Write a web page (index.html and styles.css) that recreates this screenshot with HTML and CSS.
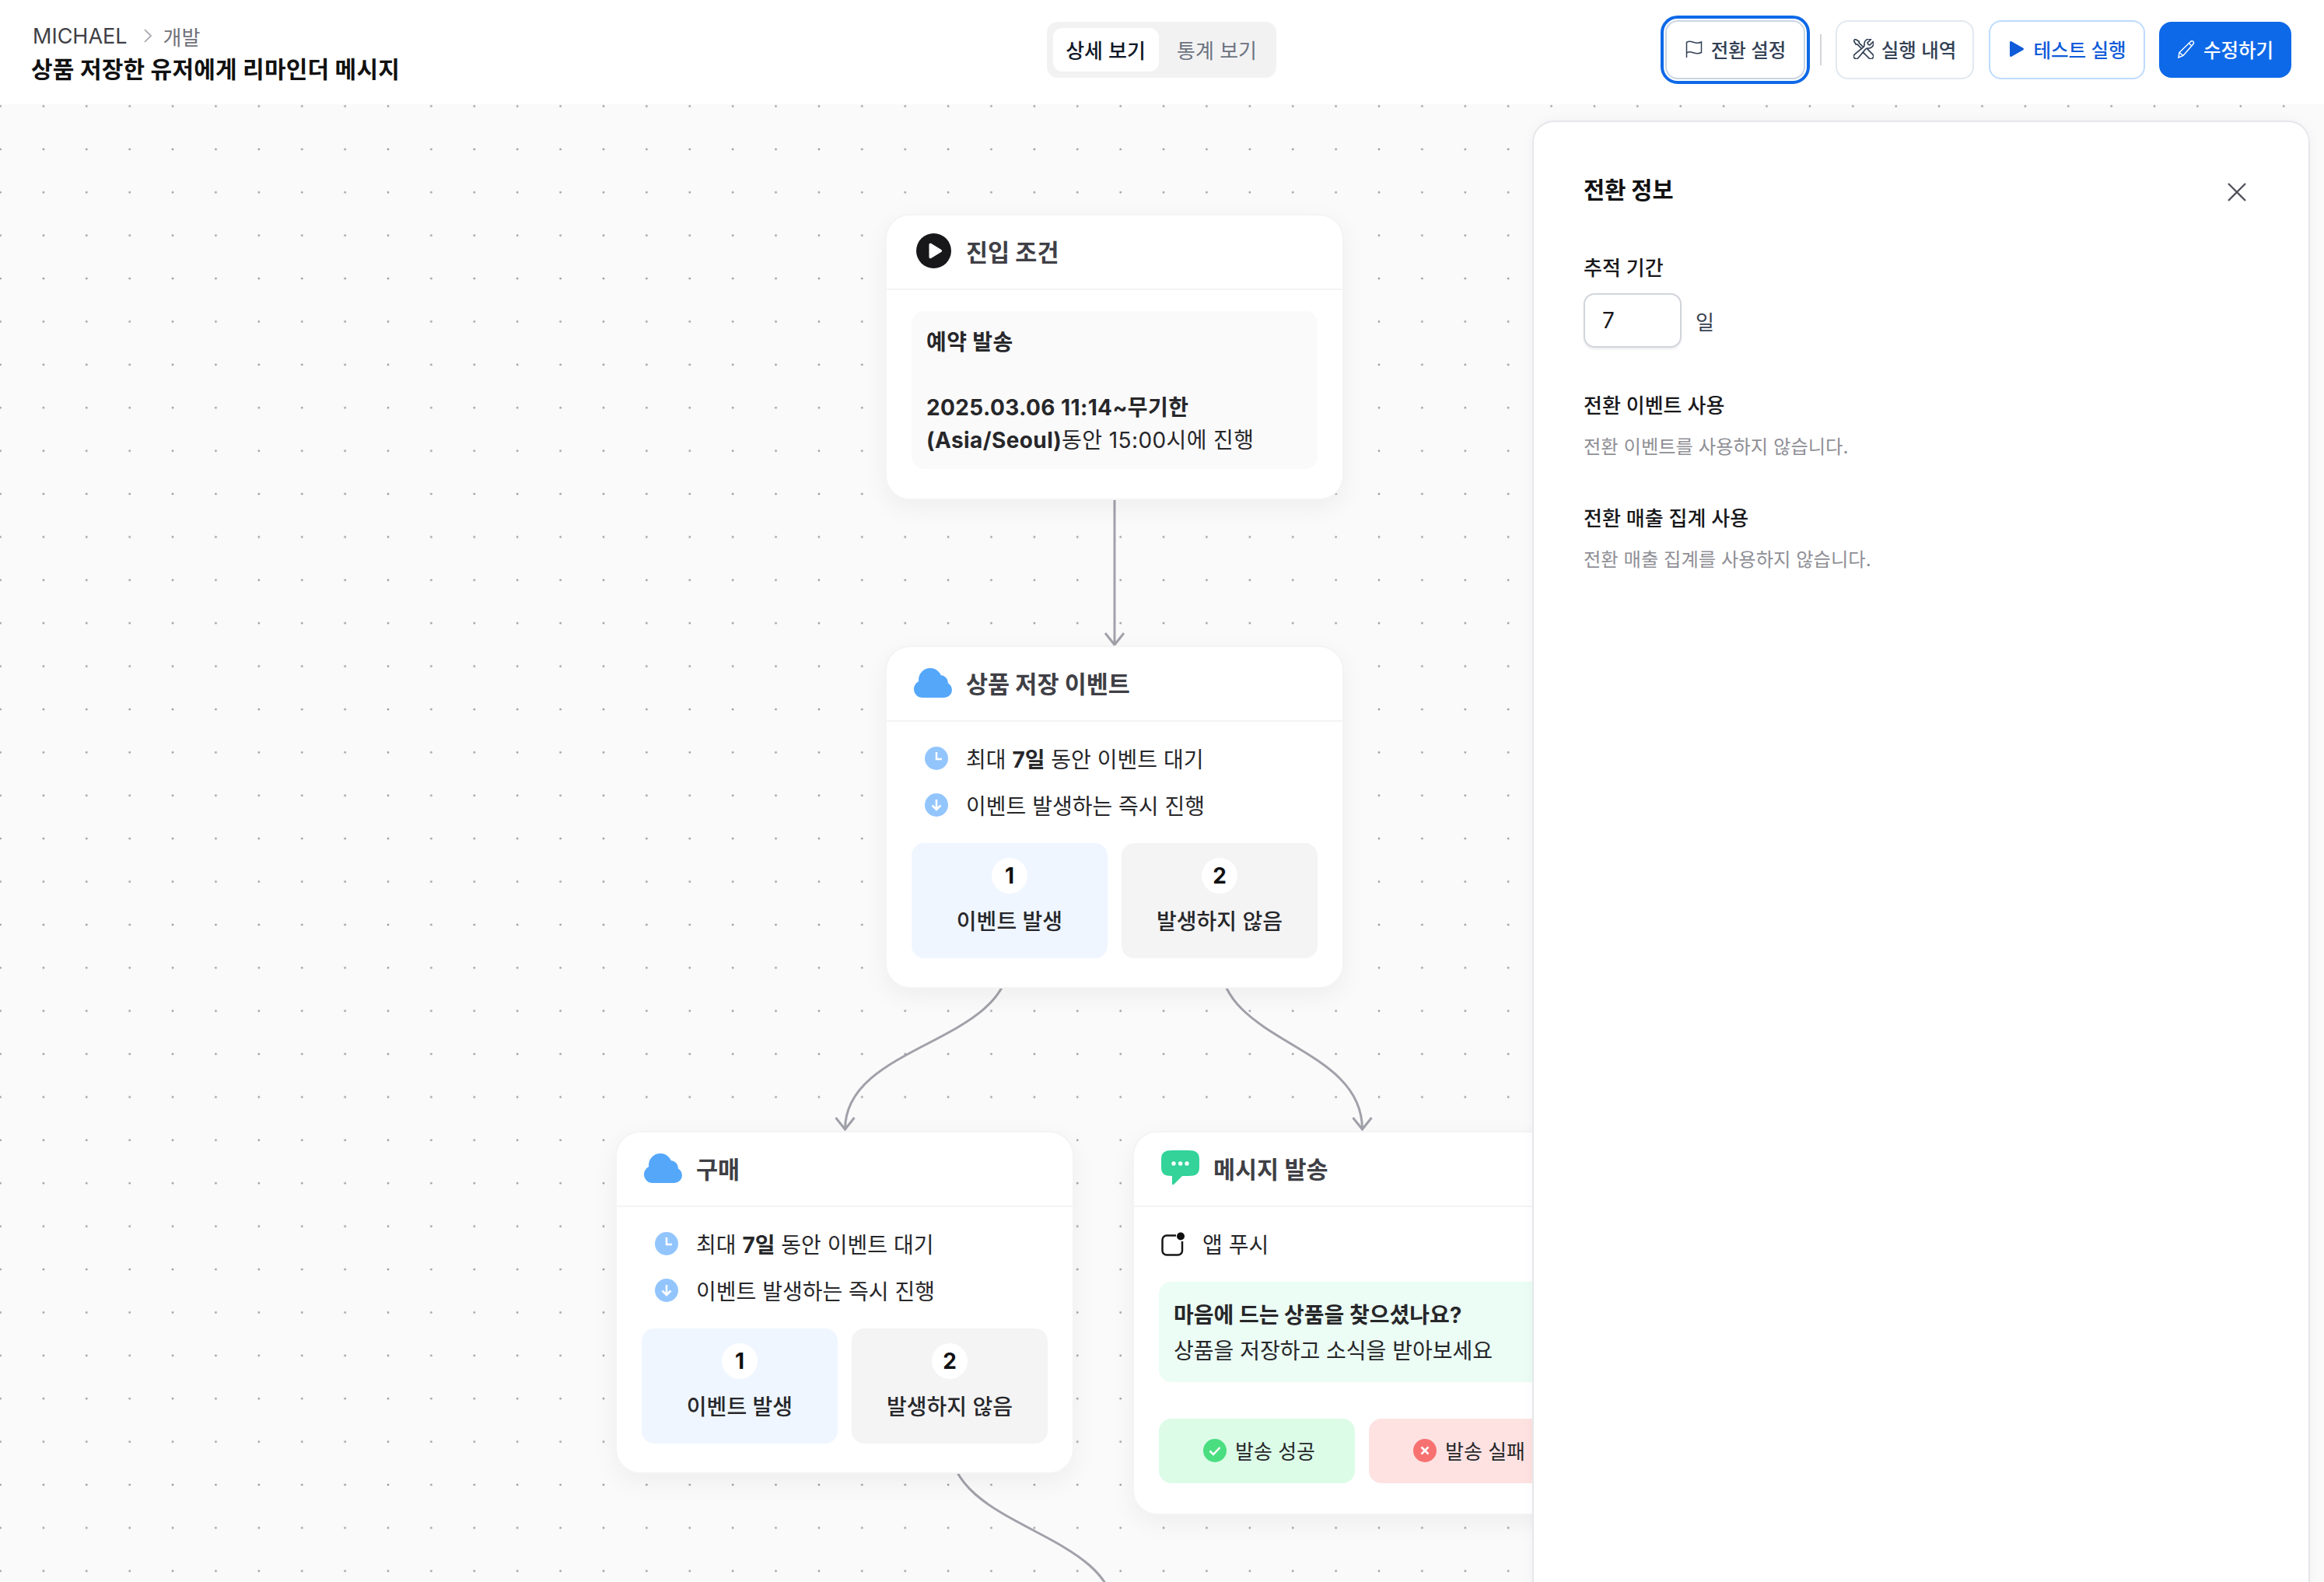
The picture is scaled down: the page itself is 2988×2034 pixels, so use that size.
FILE: index.html
```html
<!DOCTYPE html>
<html lang="ko">
  <head>
    <meta charset="UTF-8" />
    <title>상품 저장한 유저에게 리마인더 메시지</title>
    <link rel="stylesheet" href="styles.css">
  </head>
  <body>
    <div class="page">
      <header class="topbar">
        <div class="crumbs">
          <div class="crumb-line">
            <span class="crumb-org">MICHAEL</span>
            <svg class="crumb-chev" viewBox="0 0 10 18"><path d="M1 1l8 8-8 8"/></svg>
            <span class="crumb-env">개발</span>
          </div>
          <div class="page-title">상품 저장한 유저에게 리마인더 메시지</div>
        </div>

        <div class="tabs">
          <div class="tab active">상세 보기</div>
          <div class="tab">통계 보기</div>
        </div>

        <div class="actions">
          <button class="btn focused">
            <svg class="btn-icon" viewBox="0 0 24 24"><path d="M2.5 23V3.5c2-1.200 4.500-1.500 7-.8 2.500.8 4.500 1.800 7 1.600 1.800-.1 3.500-.6 5-1.300v13.500c-1.500.7-3.200 1.200-5 1.300-2.500.2-4.500-.8-7-1.600-2.500-.7-5-.4-7 .8"/></svg>
            전환 설정
          </button>
          <span class="action-sep"></span>
          <button class="btn history">
            <svg class="btn-icon tools" viewBox="2 2 20 20"><path d="M11.420 15.170 17.250 21A2.652 2.652 0 0 0 21 17.250l-5.877-5.877M11.420 15.170l2.496-3.030c.317-.384.740-.626 1.208-.766M11.420 15.170l-4.655 5.653a2.548 2.548 0 1 1-3.586-3.586l6.837-5.630m5.108-.233c.550-.164 1.163-.188 1.743-.140a4.500 4.500 0 0 0 4.486-6.336l-3.276 3.277a3.004 3.004 0 0 1-2.250-2.250l3.276-3.276a4.500 4.500 0 0 0-6.336 4.486c.091 1.076-.071 2.264-.904 2.950l-.102.085m-1.745 1.437L5.909 7.500H4.500L2.250 3.750l1.500-1.500L7.500 4.500v1.409l4.260 4.260m-1.745 1.437 1.745-1.437"/></svg>
            실행 내역
          </button>
          <button class="btn test">
            <svg class="btn-icon" viewBox="0 0 24 24"><path class="solid" d="M4 3.500c0-1.200 1.200-1.900 2.200-1.300l15 8.500c1 .6 1 2 0 2.600l-15 8.500c-1 .6-2.200-.1-2.200-1.300z"/></svg>
            테스트 실행
          </button>
          <button class="btn primary">
            <svg class="btn-icon" viewBox="0 0 24 24"><path d="M17.500 2.500a2.300 2.300 0 0 1 3.500 3L8 20.500l-6 2.500 1-6.500zM15.500 5l3.500 3M3 16.500 8 20.500"/></svg>
            수정하기
          </button>
        </div>
      </header>

      <main class="canvas">
        <svg class="edges" width="2988" height="1900" viewBox="0 134 2988 1900">
          <path d="M1433 641V829M1421 814l12 15 12-15"/>
          <path d="M1298 1232C1298 1342 1086.500 1342 1086.500 1452M1074.500 1437l12 15 12-15"/>
          <path d="M1568 1232C1568 1342 1751.500 1342 1751.500 1452M1739.500 1437l12 15 12-15"/>
          <path d="M1221 1855C1221 1967 1434 1967 1434 2079"/>
        </svg>

        <section class="node node-start">
          <div class="node-head">
            <span class="head-icon">
              <svg width="45" height="45" viewBox="0 0 45 45"><circle cx="22.500" cy="22.500" r="22.500" fill="#18181b"/><path d="M16.500 14.500c0-1.500 1.500-2.300 2.700-1.600l13 8c1.200.7 1.200 2.500 0 3.200l-13 8c-1.200.7-2.700-.1-2.700-1.600z" fill="#fff"/></svg>
            </span>
            <h2>진입 조건</h2>
          </div>
          <div class="node-body">
            <div class="schedule">
              <b>예약 발송</b><br><br>
              <b>2025.03.06 11:14~무기한<br>(Asia/Seoul)</b>동안 15:00시에 진행
            </div>
          </div>
        </section>

        <section class="node node-save">
          <div class="node-head">
            <span class="head-icon">
              <svg class="cloud" width="50" height="38" viewBox="0 0 50 38"><circle cx="21" cy="15" r="15"/><circle cx="34" cy="19" r="10"/><circle cx="11" cy="27" r="11"/><circle cx="39" cy="28" r="10"/><rect x="11" y="18" width="28" height="20"/></svg>
            </span>
            <h2>상품 저장 이벤트</h2>
          </div>
          <div class="node-body">
            <div class="row">
              <svg class="row-icon" viewBox="0 0 30 30"><circle cx="15" cy="15" r="15"/><path d="M15 7v9h7"/></svg>
              <span>최대 <b>7일</b> 동안 이벤트 대기</span>
            </div>
            <div class="row">
              <svg class="row-icon" viewBox="0 0 30 30"><circle cx="15" cy="15" r="15"/><path d="M15 8v13M9.500 15.500 15 21l5.500-5.500"/></svg>
              <span>이벤트 발생하는 즉시 진행</span>
            </div>
            <div class="branches">
              <div class="branch yes"><span class="badge">1</span><span>이벤트 발생</span></div>
              <div class="branch no"><span class="badge">2</span><span>발생하지 않음</span></div>
            </div>
          </div>
        </section>

        <section class="node node-buy">
          <div class="node-head">
            <span class="head-icon">
              <svg class="cloud" width="50" height="38" viewBox="0 0 50 38"><circle cx="21" cy="15" r="15"/><circle cx="34" cy="19" r="10"/><circle cx="11" cy="27" r="11"/><circle cx="39" cy="28" r="10"/><rect x="11" y="18" width="28" height="20"/></svg>
            </span>
            <h2>구매</h2>
          </div>
          <div class="node-body">
            <div class="row">
              <svg class="row-icon" viewBox="0 0 30 30"><circle cx="15" cy="15" r="15"/><path d="M15 7v9h7"/></svg>
              <span>최대 <b>7일</b> 동안 이벤트 대기</span>
            </div>
            <div class="row">
              <svg class="row-icon" viewBox="0 0 30 30"><circle cx="15" cy="15" r="15"/><path d="M15 8v13M9.500 15.500 15 21l5.500-5.500"/></svg>
              <span>이벤트 발생하는 즉시 진행</span>
            </div>
            <div class="branches">
              <div class="branch yes"><span class="badge">1</span><span>이벤트 발생</span></div>
              <div class="branch no"><span class="badge">2</span><span>발생하지 않음</span></div>
            </div>
          </div>
        </section>

        <section class="node node-msg">
          <div class="node-head">
            <span class="head-icon">
              <svg width="50" height="45" viewBox="0 0 50 45"><path d="M14 0H35C45 0 49 3 49 12V22C49 30 45 33 35 33H27L16 44Q14 45 14 43V33C4 33 0 30 0 22V12C0 3 4 0 14 0Z" fill="#33d39a"/><circle cx="16" cy="17" r="2.700" fill="#fff"/><circle cx="24.700" cy="17" r="2.700" fill="#fff"/><circle cx="33" cy="17" r="2.700" fill="#fff"/></svg>
            </span>
            <h2>메시지 발송</h2>
          </div>
          <div class="node-body">
            <div class="row channel">
              <svg class="push-icon" viewBox="0 0 31 31"><path d="M19 4.500H7A5.500 5.500 0 0 0 1.500 10V24A5.500 5.500 0 0 0 7 29.500H21.500A5.500 5.500 0 0 0 27 24V12" fill="none" stroke="#18181b" stroke-width="2.500"/><circle cx="25" cy="5.500" r="5" fill="#111"/></svg>
              <span>앱 푸시</span>
            </div>
            <div class="message">
              <b>마음에 드는 상품을 찾으셨나요?</b><br>
              상품을 저장하고 소식을 받아보세요
            </div>
            <div class="results">
              <div class="result ok">
                <svg class="result-icon" viewBox="0 0 30 30"><circle cx="15" cy="15" r="15" fill="#4ade80"/><path d="M8.500 15.500l4.500 4.500 8.500-9"/></svg>
                발송 성공
              </div>
              <div class="result fail">
                <svg class="result-icon" viewBox="0 0 30 30"><circle cx="15" cy="15" r="15" fill="#f87171"/><path d="M10.500 10.500l9 9M19.500 10.500l-9 9"/></svg>
                발송 실패
              </div>
            </div>
          </div>
        </section>

        <aside class="panel">
          <div class="panel-head">
            <h3>전환 정보</h3>
            <svg class="close" viewBox="0 0 26 26"><path d="M2 2l22 22M24 2 2 24"/></svg>
          </div>
          <div class="field-label first">추적 기간</div>
          <div class="period">
            <div class="period-input">7</div>
            <span>일</span>
          </div>
          <div class="field-label">전환 이벤트 사용</div>
          <div class="field-desc">전환 이벤트를 사용하지 않습니다.</div>
          <div class="field-label">전환 매출 집계 사용</div>
          <div class="field-desc">전환 매출 집계를 사용하지 않습니다.</div>
        </aside>
      </main>
    </div>
  </body>
</html>
```

FILE: styles.css
```css
* {
  box-sizing: border-box;
}

html, body {
  margin: 0;
  height: 100%;
  overflow: hidden;
}

body {
  font-family: "Inter", "Noto Sans CJK KR", sans-serif;
  color: #18181b;
  background-color: #fff;
}

b {
  font-weight: 700;
}

.page {
  display: flex;
  flex-direction: column;
  height: 100vh;
}

/* top bar */
.topbar {
  display: grid;
  grid-template-columns: 1fr auto 1fr;
  align-items: start;
  height: 134px;
  flex: none;
  padding: 26px 42px 0 40px;
  background-color: #fff;
}

.crumbs {
  margin-top: 2px;
}

.crumb-line {
  display: flex;
  align-items: center;
  height: 36px;
  padding-left: 2px;
  font-size: 27px;
  color: #3f3f46;
}

.crumb-chev {
  width: 10px;
  height: 18px;
  margin: 0 15px 0 21px;
  fill: none;
  stroke: #a1a1aa;
  stroke-width: 1.600;
}

.crumb-env {
  font-size: 26px;
  color: #71717a;
}

.page-title {
  margin-top: 3px;
  font-size: 30px;
  line-height: 44px;
  font-weight: 700;
  letter-spacing: 0.2px;
  color: #111;
}

.tabs {
  display: flex;
  margin-top: 2px;
  padding: 8px;
  height: 72px;
  border-radius: 14px;
  background-color: #f2f2f3;
}

.tab {
  display: flex;
  align-items: center;
  justify-content: center;
  width: 136px;
  padding-bottom: 2px;
  font-size: 26px;
  color: #6b7280;
  border-radius: 12px;
}

.tab + .tab {
  width: 143px;
  padding-left: 7px;
}

.tab.active {
  background-color: #fff;
  color: #111827;
  font-weight: 500;
}

.actions {
  display: flex;
  align-items: center;
  justify-content: flex-end;
  gap: 18.500px;
  height: 76px;
}

.btn {
  display: flex;
  align-items: center;
  justify-content: center;
  gap: 10px;
  height: 76px;
  padding: 0 0 2px;
  font-family: inherit;
  font-size: 24.500px;
  font-weight: 500;
  color: #334155;
  background-color: #fff;
  border: 2px solid #e2e8f0;
  border-radius: 16px;
}

.btn.focused {
  width: 180px;
  border-color: #cbd5e1;
  outline: 4px solid #0e69e8;
  outline-offset: 2px;
}

.btn.history {
  width: 178px;
}

.btn.test {
  width: 201px;
  color: #0f5bd8;
  border-color: #bfdbfe;
}

.btn.primary {
  width: 170px;
  height: 72px;
  color: #fff;
  background-color: #0e69e8;
  border-color: #0e69e8;
}

.btn-icon {
  width: 24px;
  height: 24px;
  fill: none;
  stroke: currentColor;
  stroke-width: 1.500;
}

.btn-icon.tools {
  width: 26px;
  height: 26px;
  stroke-width: 1.300;
}

.btn-icon .solid {
  fill: currentColor;
  stroke: none;
}

.action-sep {
  width: 2px;
  height: 40px;
  background-color: #d4d4d8;
}

/* canvas */
.canvas {
  position: relative;
  flex: 1;
  overflow: hidden;
  background-color: #fafafa;
  background-image: radial-gradient(circle, #9a9aa3 1.100px, transparent 1.700px);
  background-size: 55.400px 55.400px;
  background-position: -27.200px -25.200px;
}

.edges {
  position: absolute;
  top: 0;
  left: 0;
  fill: none;
  stroke: #a1a1aa;
  stroke-width: 3;
}

.node {
  position: absolute;
  width: 590px;
  background-color: #fff;
  border: 2px solid #f4f4f5;
  border-radius: 32px;
  box-shadow: 0 10px 32px rgba(0, 0, 0, 0.05);
}

.node-start { left: 1138px; top: 141px; }
.node-save { left: 1138px; top: 696px; }
.node-buy { left: 791px; top: 1320px; }
.node-msg { left: 1456px; top: 1320px; }

.node-head {
  display: flex;
  align-items: center;
  height: 96px;
  padding: 0 0 3px 35px;
  border-bottom: 2px solid #f4f4f5;
}

.head-icon {
  display: flex;
  justify-content: center;
  width: 50px;
  margin-right: 17px;
}

.cloud {
  fill: #55a7fa;
}

.node-head h2 {
  margin: 0;
  font-size: 30.500px;
  font-weight: 700;
  color: #3f3f46;
}

.node-body {
  padding: 18px 32px 37px;
}

.node-start .node-body {
  padding: 27px 32px 38px;
}

.node-msg .node-body {
  padding-bottom: 39px;
}

.schedule {
  padding: 19px 19px 16px;
  font-size: 28px;
  line-height: 42px;
  letter-spacing: 0.400px;
  color: #27272a;
  background-color: #fafafa;
  border-radius: 16px;
}

.row {
  display: flex;
  align-items: center;
  height: 60px;
  padding: 0 0 2px 17px;
  font-size: 28px;
  color: #27272a;
}

.row-icon {
  width: 30px;
  height: 30px;
  margin-right: 23px;
  fill: #93c5fd;
}

.row-icon path {
  fill: none;
  stroke: #fff;
  stroke-width: 2.500;
}

.branches, .results {
  display: grid;
  grid-template-columns: 1fr 1fr;
  gap: 18px;
  margin-top: 18px;
}

.branch {
  display: flex;
  flex-direction: column;
  align-items: center;
  height: 148px;
  padding-top: 19px;
  font-size: 28px;
  line-height: 40px;
  font-weight: 500;
  color: #27272a;
  border-radius: 16px;
}

.branch.yes {
  background-color: #eff6ff;
}

.branch.no {
  background-color: #f4f4f5;
}

.badge {
  display: flex;
  align-items: center;
  justify-content: center;
  width: 46px;
  height: 46px;
  margin-bottom: 16px;
  font-weight: 700;
  color: #111;
  background-color: #fff;
  border-radius: 50%;
}

.channel {
  padding-left: 3px;
}

.push-icon {
  width: 31px;
  height: 31px;
  margin-right: 22px;
}

.message {
  margin-top: 18px;
  padding: 20px 19px 15px;
  height: 129px;
  font-size: 28px;
  line-height: 46px;
  color: #27272a;
  background-color: #ebfdf4;
  border-radius: 16px;
}

.results {
  margin-top: 47px;
}

.result {
  display: flex;
  align-items: center;
  justify-content: center;
  gap: 11px;
  height: 83px;
  padding: 0 0 2px 6px;
  font-size: 26px;
  color: #27272a;
  border-radius: 16px;
}

.result.ok {
  background-color: #dcfce7;
}

.result.fail {
  background-color: #fee2e2;
}

.result-icon {
  width: 30px;
  height: 30px;
}

.result-icon path {
  fill: none;
  stroke: #fff;
  stroke-width: 2.500;
}

/* right panel */
.panel {
  position: absolute;
  top: 21px;
  left: 1970px;
  width: 1000px;
  height: 2000px;
  padding: 65px 79px 0 64px;
  background-color: #fff;
  border: 2px solid #e5e7eb;
  border-radius: 28px;
  box-shadow: 0 0 16px rgba(0, 0, 0, 0.04);
}

.panel-head {
  display: flex;
  align-items: center;
  justify-content: space-between;
  height: 40px;
}

.panel-head h3 {
  margin: 0;
  font-size: 29.500px;
  font-weight: 700;
  color: #111;
}

.close {
  width: 26px;
  height: 26px;
  margin-top: 10px;
  fill: none;
  stroke: #52525b;
  stroke-width: 2.400;
}

.field-label {
  margin-top: 57px;
  font-size: 26px;
  line-height: 36px;
  font-weight: 500;
  color: #18181b;
}

.field-label.first {
  margin-top: 65px;
}

.period {
  display: flex;
  align-items: center;
  gap: 18px;
  margin-top: 14px;
  font-size: 26px;
  color: #374151;
}

.period-input {
  display: flex;
  align-items: center;
  width: 126px;
  height: 70px;
  padding-left: 22px;
  font-size: 28px;
  color: #18181b;
  border: 2px solid #d1d5db;
  border-radius: 14px;
  box-shadow: 0 2px 3px rgba(0, 0, 0, 0.08);
}

.field-desc {
  margin-top: 16px;
  font-size: 24.300px;
  line-height: 36px;
  color: #8f8f96;
}
```
